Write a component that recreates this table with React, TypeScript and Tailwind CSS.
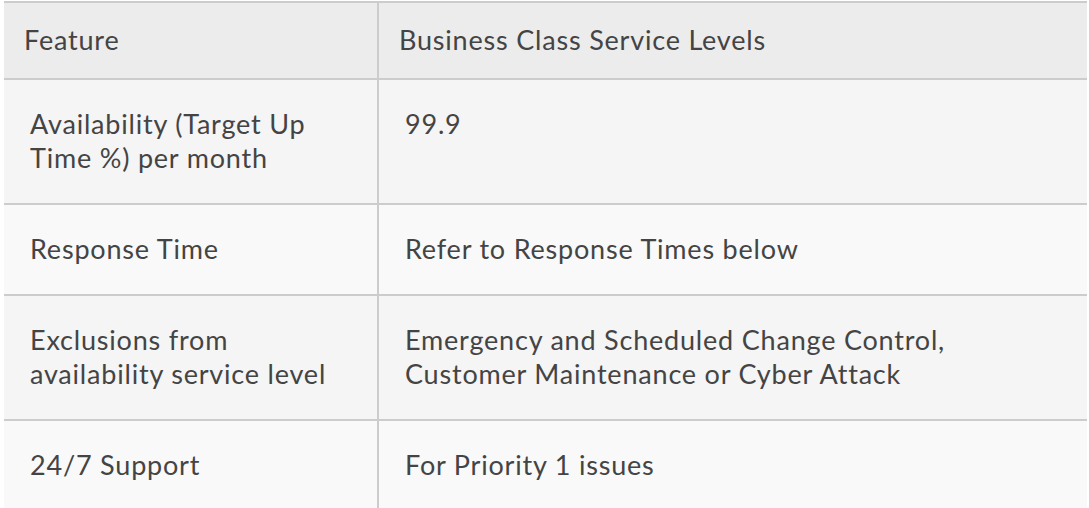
const rows: { feature: React.ReactNode; level: React.ReactNode; bg: string }[] = [
  {
    feature: <>Availability (Target Up<br />Time %) per month</>,
    level: '99.9',
    bg: 'bg-[#f5f5f5]',
  },
  {
    feature: 'Response Time',
    level: 'Refer to Response Times below',
    bg: 'bg-[#f9f9f9]',
  },
  {
    feature: <>Exclusions from<br />availability service level</>,
    level: <>Emergency and Scheduled Change Control,<br />Customer Maintenance or Cyber Attack</>,
    bg: 'bg-[#f5f5f5]',
  },
  {
    feature: '24/7 Support',
    level: 'For Priority 1 issues',
    bg: 'bg-[#f9f9f9]',
  },
]

export default function App() {
  return (
    <div className="min-h-screen bg-white pl-[4px] pr-[2px] pt-[1px] font-['Lato',sans-serif] text-[27px] leading-[34px] tracking-[0.8px] text-[#444444]">
      <div className="border-t-2 border-[#cccccc]">
        <div className="grid grid-cols-[375px_1fr] bg-[#ececec] border-b-2 border-[#cccccc]">
          <div className="border-r-2 border-[#cccccc] px-[20px] pt-[20px] pb-[21px] whitespace-nowrap">Feature</div>
          <div className="px-[20px] pt-[20px] pb-[21px] whitespace-nowrap">Business Class Service Levels</div>
        </div>
        {rows.map((row, i) => (
          <div
            key={i}
            className={`grid grid-cols-[375px_1fr] ${row.bg} ${i < rows.length - 1 ? 'border-b-2 border-[#cccccc]' : ''}`}
          >
            <div className="border-r-2 border-[#cccccc] px-[26px] pt-[27px] pb-[28px] whitespace-nowrap">{row.feature}</div>
            <div className="px-[26px] pt-[27px] pb-[28px] whitespace-nowrap">{row.level}</div>
          </div>
        ))}
      </div>
    </div>
  )
}
